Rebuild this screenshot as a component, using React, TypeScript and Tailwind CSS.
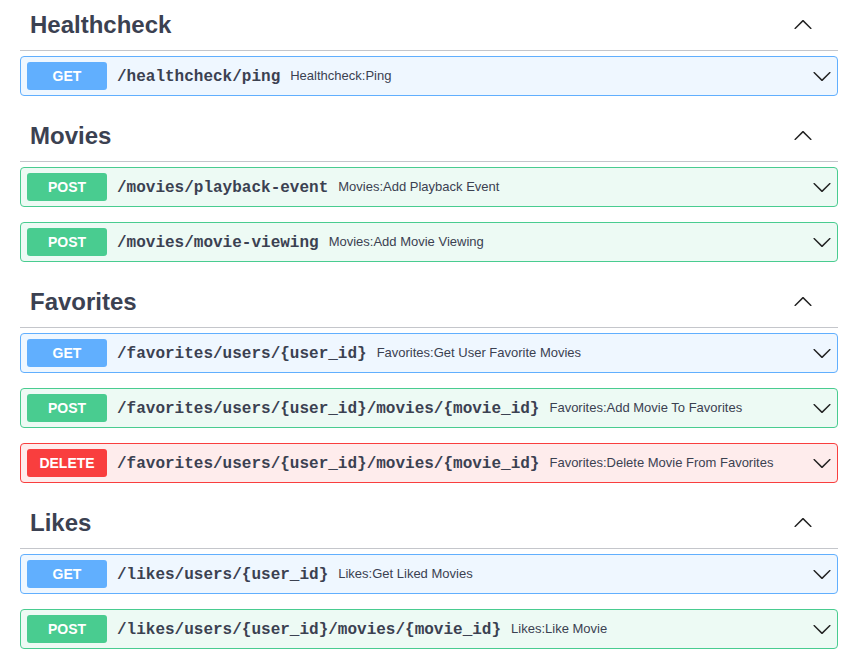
import React from "react";

type Method = "GET" | "POST" | "DELETE";

type Op = { method: Method; path: string; summary: string };

type Section = { tag: string; ops: Op[] };

const sections: Section[] = [
  {
    tag: "Healthcheck",
    ops: [{ method: "GET", path: "/healthcheck/ping", summary: "Healthcheck:Ping" }],
  },
  {
    tag: "Movies",
    ops: [
      { method: "POST", path: "/movies/playback-event", summary: "Movies:Add Playback Event" },
      { method: "POST", path: "/movies/movie-viewing", summary: "Movies:Add Movie Viewing" },
    ],
  },
  {
    tag: "Favorites",
    ops: [
      { method: "GET", path: "/favorites/users/{user_id}", summary: "Favorites:Get User Favorite Movies" },
      { method: "POST", path: "/favorites/users/{user_id}/movies/{movie_id}", summary: "Favorites:Add Movie To Favorites" },
      { method: "DELETE", path: "/favorites/users/{user_id}/movies/{movie_id}", summary: "Favorites:Delete Movie From Favorites" },
    ],
  },
  {
    tag: "Likes",
    ops: [
      { method: "GET", path: "/likes/users/{user_id}", summary: "Likes:Get Liked Movies" },
      { method: "POST", path: "/likes/users/{user_id}/movies/{movie_id}", summary: "Likes:Like Movie" },
    ],
  },
];

const styles: Record<Method, { box: string; badge: string }> = {
  GET: { box: "bg-[#eff7ff] border-[#61affe]", badge: "bg-[#61affe]" },
  POST: { box: "bg-[#edfaf4] border-[#49cc90]", badge: "bg-[#49cc90]" },
  DELETE: { box: "bg-[#feecec] border-[#f93e3e]", badge: "bg-[#f93e3e]" },
};

// swagger's arrow, points down
const Arrow = ({ up = false }: { up?: boolean }) => (
  <svg
    width="20"
    height="20"
    viewBox="0 0 20 20"
    className={up ? "rotate-180" : ""}
    fill="#222"
  >
    <path d="M17.418 6.109c.272-.268.709-.268.979 0s.271.701 0 .969l-7.908 7.83c-.27.268-.707.268-.979 0l-7.908-7.83c-.27-.268-.27-.701 0-.969.271-.268.709-.268.979 0L10 13.25l7.418-7.141z" />
  </svg>
);

const OpBlock = ({ op }: { op: Op }) => (
  <div
    className={`flex items-center h-[40px] mb-[15px] border rounded-[4px] pl-[6px] pr-[5px] ${styles[op.method].box}`}
  >
    <span
      className={`w-[80px] h-[28px] flex items-center justify-center rounded-[3px] text-white text-[14px] font-bold ${styles[op.method].badge}`}
    >
      {op.method}
    </span>
    <span className="pl-[10px] pr-[10px] pt-[2px] text-[16px] font-bold text-[#3b4151] font-['Liberation_Mono',monospace]">
      {op.path}
    </span>
    <span className="text-[13px] text-[#3b4151]">{op.summary}</span>
    <span className="ml-auto flex">
      <Arrow />
    </span>
  </div>
);

export default function App() {
  return (
    <div className="pl-5 pr-[17px] bg-white font-['Liberation_Sans',Arial,sans-serif]">
      {sections.map((s) => (
        <div key={s.tag}>
          <div className="h-[51px] flex items-center pl-[10px] pr-[25px] border-b border-[#c4c6cb]">
            <h3 className="text-[24px] font-bold text-[#3b4151]">{s.tag}</h3>
            <span className="ml-auto flex">
              <Arrow up />
            </span>
          </div>
          <div className="pt-[5px]">
            {s.ops.map((op) => (
              <OpBlock key={op.method + op.path} op={op} />
            ))}
          </div>
        </div>
      ))}
    </div>
  );
}
